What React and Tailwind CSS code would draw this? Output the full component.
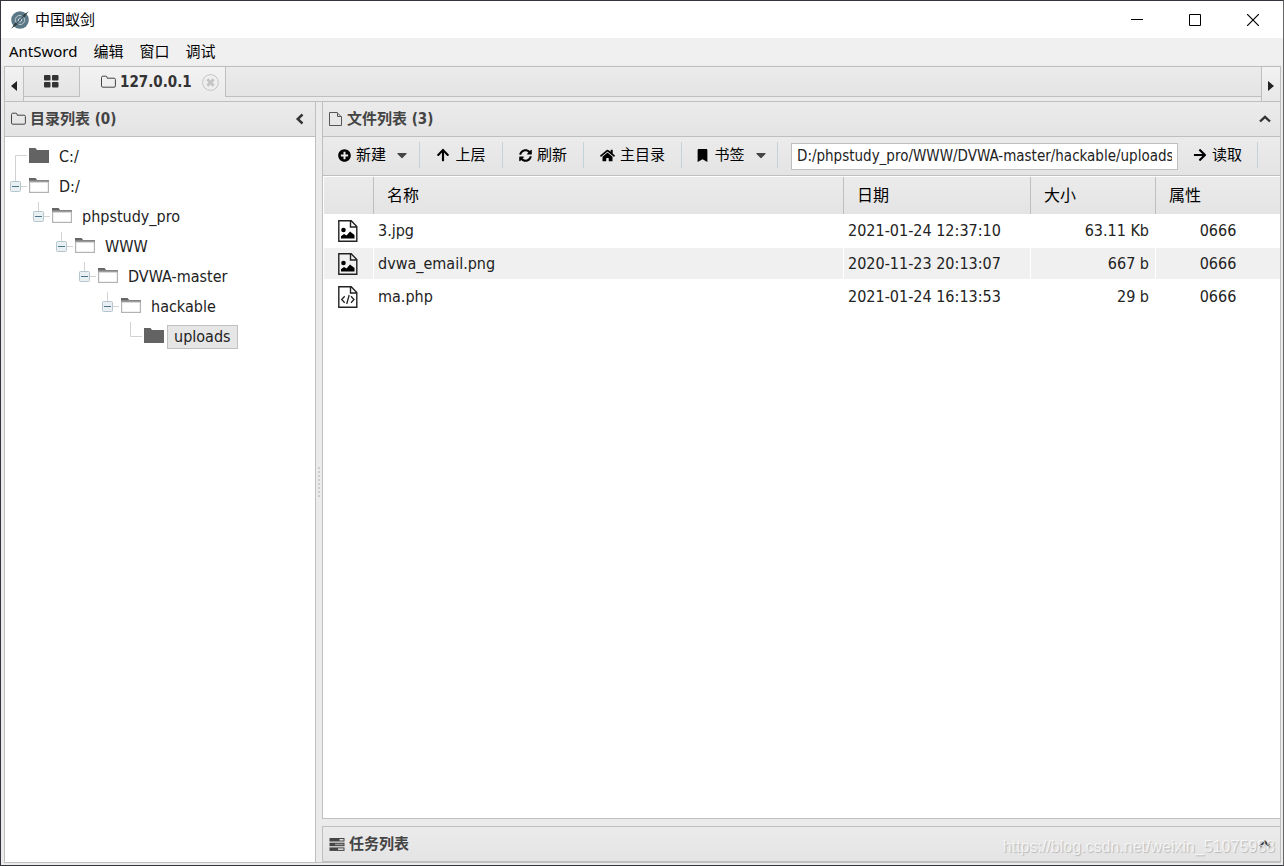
import { useState } from 'react'
import {
  FaPlusCircle,
  FaArrowUp,
  FaArrowRight,
  FaSyncAlt,
  FaHome,
  FaBookmark,
  FaCaretDown,
} from 'react-icons/fa'

const tree = [
  { name: 'C:/', first: true },
  {
    name: 'D:/',
    children: [{
      name: 'phpstudy_pro',
      children: [{
        name: 'WWW',
        children: [{
          name: 'DVWA-master',
          children: [{
            name: 'hackable',
            children: [{ name: 'uploads' }],
          }],
        }],
      }],
    }],
  },
]

const files = [
  { name: '3.jpg', date: '2021-01-24 12:37:10', size: '63.11 Kb', attr: '0666', type: 'image' },
  { name: 'dvwa_email.png', date: '2020-11-23 20:13:07', size: '667 b', attr: '0666', type: 'image' },
  { name: 'ma.php', date: '2021-01-24 16:13:53', size: '29 b', attr: '0666', type: 'code' },
]

const headBg = 'bg-linear-to-b from-[#ebebeb] to-[#e4e4e4]'

// ICONS
function Logo() {
  return (
    <svg width="20" height="20" viewBox="0 0 20 20" fill="none">
      <circle cx="10" cy="10" r="8.8" fill="#5a7885" />
      <path d="M6 12.500a4.600 4.600 0 0 1 5.500-6.800M14 7.500a4.600 4.600 0 0 1-5.500 6.800" stroke="#b9cad1" />
      <path d="M8.400 11.500c-.5-2 .3-3.300 2-3.500M11.600 8.500c.5 2-.3 3.300-2 3.500" stroke="#dde7ea" />
      <path d="M1 18.800 5.700 12.800 7.300 14.200ZM18.800 1 12.800 5.700 14.200 7.300Z" fill="#23282c" />
      <path d="M3 17 17 3" stroke="#3a464c" strokeWidth=".7" />
    </svg>
  )
}

function FolderOutline() {
  return (
    <svg width="15" height="14" viewBox="0 0 15 14" fill="none" stroke="#444">
      <path d="M.5 2.5a1.3 1.3 0 0 1 1.3-1.3h3a1.3 1.3 0 0 1 1.3 1.3v.7h7a1.3 1.3 0 0 1 1.3 1.3v6.4a1.3 1.3 0 0 1-1.3 1.3H1.8A1.3 1.3 0 0 1 .5 10.900Z" />
    </svg>
  )
}

function FileOutline() {
  return (
    <svg width="14" height="16" viewBox="0 0 14 16" fill="none" stroke="#555">
      <path d="M.5 1.500h7.500L12.500 6v8.500H.5ZM8.500 1.500V5.500H12.500" />
    </svg>
  )
}

function GridIcon() {
  return (
    <svg width="15" height="13" viewBox="0 0 15 13" fill="#333">
      <rect width="6.500" height="5.500" rx="1" />
      <rect x="8" width="6.500" height="5.500" rx="1" />
      <rect y="7" width="6.500" height="5.500" rx="1" />
      <rect x="8" y="7" width="6.500" height="5.500" rx="1" />
    </svg>
  )
}

function TasksIcon() {
  return (
    <svg width="16" height="13" viewBox="0 0 16 13">
      <rect x=".5" y="0" width="15" height="3.500" fill="#444" />
      <rect x="10.500" y="1" width="4" height="1.500" fill="#e0e0e0" />
      <rect x=".5" y="4.700" width="15" height="3.500" fill="#444" />
      <rect x="6" y="5.700" width="8.500" height="1.500" fill="#999" />
      <rect x=".5" y="9.400" width="15" height="3.500" fill="#444" />
      <rect x="9" y="10.400" width="5.500" height="1.500" fill="#e0e0e0" />
    </svg>
  )
}

function Chevron({ dir }) {
  return (
    <svg width="12" height="12" viewBox="0 0 12 12" fill="none" stroke="#333" strokeWidth="2.400">
      <path d={dir === 'left' ? 'M8.500 1.500 3.700 6l4.800 4.500' : 'M1 8.500 6 3.800l5 4.700'} />
    </svg>
  )
}

function TreeFolder({ open }) {
  return open ? (
    <svg width="20" height="16" viewBox="0 0 20 16">
      <path d="M0 0h6.500l1.500 2H20v13H0Z" fill="#b3b3b3" />
      <path d="M0 0h6.500l1.500 2v1H0Z" fill="#666" />
      <path d="M8 2h12v1.500H0V2Z" fill="#858585" />
      <path d="M1.200 4.500h17.600v9.300H1.200Z" fill="#fff" />
    </svg>
  ) : (
    <svg width="20" height="16" viewBox="0 0 20 16">
      <path d="M0 0h6.500l1.500 2H20v13H0Z" fill="#636363" />
    </svg>
  )
}

function Connector({ node }) {
  const line = node.first ? 'M10.500 30V13.500H22' : 'M10.500 0V14.500H22'
  return (
    <svg width="24" height="30" viewBox="0 0 24 30" fill="none" className="shrink-0">
      <path d={line} stroke="#d2d2d2" />
      {node.children && (
        <>
          <rect x="5.500" y="9.500" width="10" height="10" rx="1" fill="#e9f0f4" stroke="#b7c5cd" />
          <path d="M7 14.500h7" stroke="#4c7488" />
        </>
      )}
    </svg>
  )
}

function FileIcon({ type }) {
  return (
    <svg width="20" height="22" viewBox="0 0 20 22" fill="none" stroke="#222" strokeWidth="1.400" className="ml-[14px]">
      <path d="M.8.8h12.400L18.800 6.500v14.700H.8ZM12.500.8v6.200h6.300" />
      {type === 'image' ? (
        <g fill="#000" stroke="none">
          <circle cx="5.500" cy="10" r="2.300" />
          <path d="M3 18.500v-2.300l3-2.200 2.500 1.500 3.500-4 4.500 3.500v3.500Z" />
        </g>
      ) : (
        <path d="M6.700 10.300 3.700 13.500l3 3.200M13 10.300l3 3.200-3 3.200M11.200 9l-2.500 9" strokeWidth="1.300" />
      )}
    </svg>
  )
}

// DIRECTORY TREE
function TreeNode({ node, selected, onSelect }) {
  return (
    <li>
      <div className="flex h-[30px]">
        <Connector node={node} />
        <span className="pt-[6px] shrink-0">
          <TreeFolder open={!!node.children} />
        </span>
        <button
          onClick={() => onSelect(node.name)}
          className={`ml-[3px] mt-[3px] h-6 px-[6px] border text-base leading-[22px] text-[#222] ${
            selected === node.name
              ? 'bg-[#e6e6e6] border-[#c0c0c0]'
              : 'border-transparent'
          }`}
        >
          {node.name}
        </button>
      </div>
      {node.children && (
        <ul className="pl-[23px]">
          {node.children.map((child) => (
            <TreeNode key={child.name} node={child} selected={selected} onSelect={onSelect} />
          ))}
        </ul>
      )}
    </li>
  )
}

function PanelHeader({ icon, title, dir, label }) {
  return (
    <div className={`flex items-center h-[34px] shrink-0 px-[6px] ${headBg}`}>
      {icon}
      <h2 className="ml-1 grow font-bold text-[#444]">{title}</h2>
      <button aria-label={label} className="mr-[3px]">
        <Chevron dir={dir} />
      </button>
    </div>
  )
}

function ToolButton({ icon, children, caret, className }) {
  return (
    <div className={`flex items-center justify-center h-[26px] border-r border-[#c3d3da] ${className}`}>
      <button className="flex items-center gap-[5px] text-black">
        {icon}
        <span>{children}</span>
        {caret && <FaCaretDown size={16} color="#444" className="ml-[3px]" />}
      </button>
    </div>
  )
}

export default function App() {

  const [selected, setSelected] = useState('uploads')
  const [path, setPath] = useState('D:/phpstudy_pro/WWW/DVWA-master/hackable/uploads')

  return (
    <div className="relative flex flex-col h-screen overflow-hidden bg-[#ebebeb] border border-[#33343c] border-r-[#666] text-[15px] font-['DejaVu_Sans_Condensed','Noto_Sans_CJK_SC',sans-serif]">

      {/* TITLE BAR */}
      <header className="flex items-center h-[37px] shrink-0 bg-white pl-[9px] font-['Noto_Sans','Noto_Sans_CJK_SC',sans-serif]">
        <Logo />
        <h1 className="ml-[5px] grow text-black">中国蚁剑</h1>
        <div className="flex self-stretch pr-px">
          <button aria-label="最小化" className="flex items-center justify-center w-[58px]">
            <svg width="12" height="12" stroke="#000"><path d="M0 5.500h12" /></svg>
          </button>
          <button aria-label="最大化" className="flex items-center justify-center w-[58px]">
            <svg width="12" height="12" fill="none" stroke="#000"><path d="M.5.5h11v11H.5Z" /></svg>
          </button>
          <button aria-label="关闭" className="flex items-center justify-center w-[58px]">
            <svg width="12" height="12" stroke="#000" strokeWidth="1.200"><path d="M0 0l12 12M12 0L0 12" /></svg>
          </button>
        </div>
      </header>

      {/* MENU */}
      <nav className="flex items-center gap-4 h-[27px] shrink-0 bg-[#f0f0f0] pl-2 text-black font-['Noto_Sans','Noto_Sans_CJK_SC',sans-serif]">
        {['AntSword', '编辑', '窗口', '调试'].map((item) => (
          <button key={item}>{item}</button>
        ))}
      </nav>

      <div className="flex flex-col grow min-h-0 mt-px ml-[3px] mr-[2px] mb-[2px] border border-[#bfbfbf]">

        {/* TABS */}
        <div className="flex h-[35px] shrink-0 border-b border-[#bfbfbf]">
          <button aria-label="向左" className="flex items-center justify-center w-[19px] pt-1 border-r border-[#bfbfbf] bg-linear-to-b from-[#f2f2f2] to-[#e8e8e8]">
            <svg width="6" height="10" fill="#222"><path d="M6 0v10L0 5Z" /></svg>
          </button>
          <button aria-label="主页" className={`flex items-center justify-center w-14 h-[30px] border-r border-b border-[#bfbfbf] ${headBg}`}>
            <GridIcon />
          </button>
          <div className="flex items-center w-[146px] h-[30px] pl-[21px] border-r border-[#bfbfbf] bg-linear-to-b from-[#f2f2f2] to-[#ebebeb]">
            <FolderOutline />
            <button className="ml-1 font-bold text-[#333]">127.0.0.1</button>
            <button aria-label="关闭标签" className="ml-auto mr-[6px]">
              <svg width="17" height="17" viewBox="0 0 17 17" fill="none" stroke="#c4c4c4">
                <circle cx="8.500" cy="8.500" r="7.900" />
                <path d="M5.300 5.300l6.400 6.400M11.700 5.300l-6.400 6.400" strokeWidth="2.800" />
              </svg>
            </button>
          </div>
          <div className={`grow h-[30px] border-b border-[#bfbfbf] ${headBg}`} />
          <button aria-label="向右" className="flex items-center justify-center w-[19px] pt-1 border-l border-[#bfbfbf] bg-linear-to-b from-[#f2f2f2] to-[#e8e8e8]">
            <svg width="6" height="10" fill="#222"><path d="M0 0v10l6-5Z" /></svg>
          </button>
        </div>

        <div className="flex grow min-h-0">

          {/* LEFT PANEL */}
          <aside className="flex flex-col w-[311px] shrink-0 border-r border-[#bfbfbf] bg-white">
            <PanelHeader icon={<FolderOutline />} title="目录列表 (0)" dir="left" label="折叠目录" />
            <ul className="grow border-t border-[#bfbfbf] pt-[5px]">
              {tree.map((node) => (
                <TreeNode key={node.name} node={node} selected={selected} onSelect={setSelected} />
              ))}
            </ul>
          </aside>

          {/* SPLITTER */}
          <div className="flex items-center justify-center w-[6px] shrink-0">
            <div className="h-[30px] border-l-2 border-dotted border-[#cdcdcd]" />
          </div>

          {/* RIGHT PANEL */}
          <div className="flex flex-col grow min-w-0 gap-[7px]">

            <main className="flex flex-col grow min-h-0 border-l border-b border-[#bfbfbf] bg-white">

              <PanelHeader icon={<FileOutline />} title="文件列表 (3)" dir="up" label="折叠文件" />

              {/* TOOLBAR */}
              <div className={`flex items-center h-10 shrink-0 pb-[2px] border-y border-[#bfbfbf] ${headBg}`}>
                <ToolButton caret className="w-[97px] pl-[6px]" icon={<FaPlusCircle size={13} />}>新建</ToolButton>
                <ToolButton className="w-[83px]" icon={<FaArrowUp size={14} />}>上层</ToolButton>
                <ToolButton className="w-[81px]" icon={<FaSyncAlt size={13} />}>刷新</ToolButton>
                <ToolButton className="w-[98px]" icon={<FaHome size={15} />}>主目录</ToolButton>
                <ToolButton caret className="w-24 pl-[6px]" icon={<FaBookmark size={13} />}>书签</ToolButton>
                <input
                  aria-label="路径"
                  value={path}
                  onChange={(e) => setPath(e.target.value)}
                  className="ml-[13px] mt-[2px] grow min-w-0 h-[27px] px-[5px] border border-[#bfbfbf] bg-white text-[#222]"
                />
                <ToolButton className="w-20" icon={<FaArrowRight size={14} />}>读取</ToolButton>
                <div className="w-[22px]" />
              </div>

              {/* FILES */}
              <div className="grow pl-px pt-px">
                <table className="w-full table-fixed border-separate border-spacing-0 text-base leading-5 text-[#222]">
                  <colgroup>
                    <col className="w-[50px]" />
                    <col />
                    <col className="w-[187px]" />
                    <col className="w-[125px]" />
                    <col className="w-[124px]" />
                  </colgroup>
                  <thead>
                    <tr className="h-[37px]">
                      {['', '名称', '日期', '大小', '属性'].map((item) => (
                        <th
                          key={item}
                          scope="col"
                          className={`pl-[13px] border-r border-[#bfbfbf] last:border-r-0 text-left font-normal text-black ${headBg}`}
                        >
                          {item}
                        </th>
                      ))}
                    </tr>
                  </thead>
                  <tbody>
                    {files.map((file) => (
                      <tr key={file.name} className="h-[33px] even:bg-[#f0f0f0]">
                        <td className="border-y border-r border-white">
                          <FileIcon type={file.type} />
                        </td>
                        <td className="pl-1 pt-px border-y border-r border-white">{file.name}</td>
                        <td className="pl-1 pt-px border-y border-r border-white">{file.date}</td>
                        <td className="pr-[6px] pt-px border-y border-r border-white text-right">{file.size}</td>
                        <td className="pt-px border-y border-white text-center">{file.attr}</td>
                      </tr>
                    ))}
                  </tbody>
                </table>
              </div>

            </main>

            {/* TASKS */}
            <section className="border-l border-y border-[#bfbfbf]">
              <PanelHeader icon={<TasksIcon />} title="任务列表" dir="up" label="展开任务" />
            </section>

          </div>
        </div>
      </div>

      {/* WATERMARK */}
      <p className="absolute right-2 bottom-[6px] text-base text-white/70 font-['Liberation_Sans',sans-serif] [text-shadow:1px_1px_1px_rgba(0,0,0,0.2)]">
        https://blog.csdn.net/weixin_51075988
      </p>

    </div>
  )
}
